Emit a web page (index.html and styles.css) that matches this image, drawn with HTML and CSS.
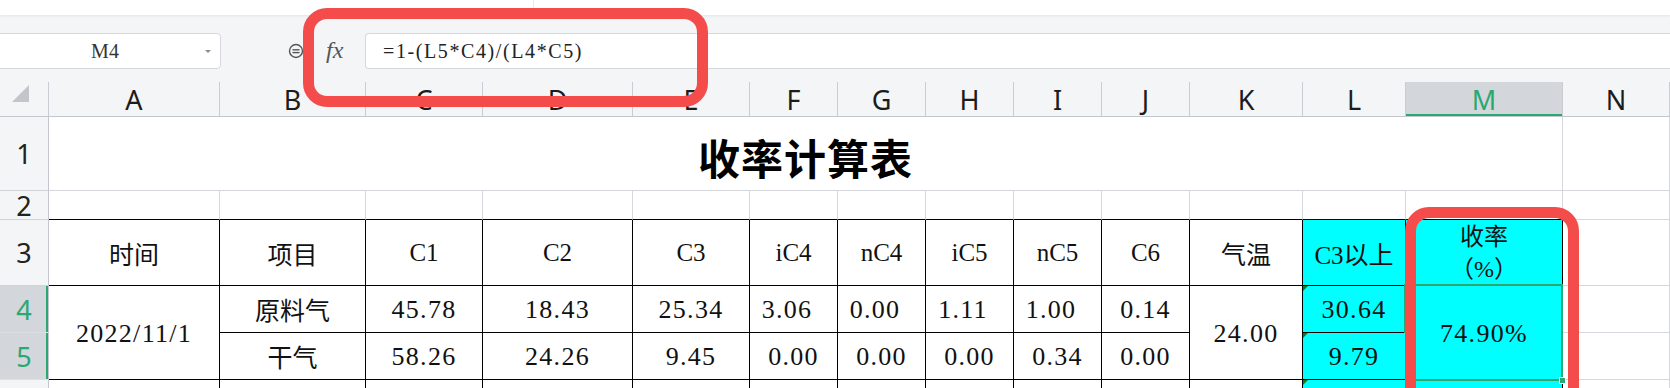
FILE: index.html
```html
<!DOCTYPE html>
<html lang="zh-CN">
<head>
<meta charset="UTF-8">
<title>收率计算表</title>
<link rel="stylesheet" href="styles.css">
</head>
<body>
<div class="topbar"><span class="tab-divider"></span></div>
<div class="strip"></div>
<div class="formula-bar">
    <div class="name-box"><span class="name-text">M4</span><span class="name-arrow"></span></div>
    <div class="fx-tools">
        <svg class="zoom-icon" width="16" height="16" viewBox="0 0 16 16"><circle cx="8" cy="8" r="6.5" fill="none" stroke="#555" stroke-width="1.4"/><line x1="4.5" y1="6.8" x2="11.5" y2="6.8" stroke="#555" stroke-width="1.4"/><line x1="4.5" y1="9.6" x2="11.5" y2="9.6" stroke="#555" stroke-width="1.4"/></svg>
        <span class="fx">fx</span>
    </div>
    <div class="formula-input">=1-(L5*C4)/(L4*C5)</div>
</div>
<div class="sheet-gap"></div>
<table class="grid">
<colgroup>
    <col class="w-hdr"><col class="w-a"><col class="w-b"><col class="w-c"><col class="w-d"><col class="w-e">
    <col class="w-f"><col class="w-f"><col class="w-f"><col class="w-f"><col class="w-f">
    <col class="w-k"><col class="w-l"><col class="w-m"><col class="w-n">
</colgroup>
<tr class="colhdr">
    <th class="corner"><span class="corner-tri"></span></th>
    <th>A</th><th>B</th><th>C</th><th>D</th><th>E</th><th>F</th><th>G</th><th>H</th><th>I</th><th>J</th><th>K</th><th>L</th><th class="active">M</th><th>N</th>
</tr>
<tr class="r1">
    <th class="rowhdr">1</th>
    <td colspan="13" class="title">收率计算表</td>
    <td></td>
</tr>
<tr class="r2">
    <th class="rowhdr">2</th>
    <td class="edge"></td><td class="edge"></td><td class="edge"></td><td class="edge"></td><td class="edge"></td><td class="edge"></td><td class="edge"></td>
    <td class="edge"></td><td class="edge"></td><td class="edge"></td><td class="edge"></td><td class="edge"></td><td class="edge"></td>
    <td></td>
</tr>
<tr class="r3">
    <th class="rowhdr">3</th>
    <td class="box">时间</td><td class="box">项目</td><td class="box">C1</td><td class="box">C2</td><td class="box">C3</td>
    <td class="box">iC4</td><td class="box">nC4</td><td class="box">iC5</td><td class="box">nC5</td><td class="box">C6</td>
    <td class="box">气温</td><td class="box cyan">C3以上</td><td class="box cyan rate-head">收率<br>（%）</td>
    <td></td>
</tr>
<tr class="r4">
    <th class="rowhdr active">4</th>
    <td rowspan="2" class="box num">2022/11/1</td>
    <td class="box">原料气</td>
    <td class="box num">45.78</td><td class="box num">18.43</td><td class="box num">25.34</td>
    <td class="box num trail">3.06</td><td class="box num trail">0.00</td><td class="box num trail">1.11</td><td class="box num trail">1.00</td>
    <td class="box num">0.14</td>
    <td rowspan="2" class="box num">24.00</td>
    <td class="box cyan num flag">30.64</td>
    <td rowspan="2" class="box cyan num sel">74.90%</td>
    <td></td>
</tr>
<tr class="r5">
    <th class="rowhdr active">5</th>
    <td class="box">干气</td>
    <td class="box num">58.26</td><td class="box num">24.26</td><td class="box num">9.45</td>
    <td class="box num">0.00</td><td class="box num">0.00</td><td class="box num">0.00</td><td class="box num">0.34</td><td class="box num">0.00</td>
    <td class="box cyan num flag">9.79</td>
    <td></td>
</tr>
<tr class="r6">
    <th class="rowhdr"></th>
    <td class="box"></td><td class="box"></td><td class="box"></td><td class="box"></td><td class="box"></td><td class="box"></td>
    <td class="box"></td><td class="box"></td><td class="box"></td><td class="box"></td><td class="box"></td>
    <td class="box cyan flag"></td><td class="box cyan"></td>
    <td></td>
</tr>
</table>
<div class="mark mark-formula"></div>
<div class="mark mark-rate"></div>
</body>
</html>
```

FILE: styles.css
```css
body { margin: 0; width: 1670px; height: 388px; overflow: hidden; position: relative; background: #fff; font-family: "Noto Sans", "Noto Sans CJK SC", sans-serif; color: #222; }

/* window chrome above the sheet */
.topbar { height: 15px; background: #fff; position: relative; z-index: 1; box-shadow: 0 1px 3px rgba(0, 0, 0, 0.07); }
.tab-divider { display: block; margin-left: 533px; width: 1px; height: 15px; background: #e8e9ec; }
.strip { height: 18px; background: #f4f5f7; }

.formula-bar { display: flex; height: 36px; background: #f4f5f7; }
.name-box { display: flex; align-items: center; box-sizing: border-box; width: 227px; margin-left: -6px; background: #fff; border: 1px solid #d6d8dd; border-radius: 4px; }
.name-text { flex: 1; padding-left: 10px; text-align: center; font-family: "Liberation Serif", serif; font-size: 20px; color: #333; }
.name-arrow { width: 0; height: 0; margin-right: 9px; border-left: 3px solid transparent; border-right: 3px solid transparent; border-top: 3px solid #8a8d93; }
.fx-tools { display: flex; align-items: center; width: 144px; padding-left: 67px; box-sizing: border-box; gap: 22px; }
.fx { font-family: "Liberation Serif", serif; font-style: italic; font-size: 24px; color: #555; margin-top: -2px; }
.formula-input { flex: 1; display: flex; align-items: center; padding-left: 17px; background: #fff; border: 1px solid #d6d8dd; border-right: 0; border-radius: 4px 0 0 4px; font-family: "Liberation Serif", serif; font-size: 20px; letter-spacing: 1.6px; color: #222; }

.sheet-gap { height: 13px; background: #f4f5f7; }

/* the grid */
.grid { width: 1670px; table-layout: fixed; border-collapse: separate; border-spacing: 0; }
.grid th, .grid td { box-sizing: border-box; padding: 0; border-right: 1px solid #d5d7dc; border-bottom: 1px solid #d5d7dc; text-align: center; vertical-align: middle; white-space: nowrap; overflow: visible; }
.w-hdr { width: 49px; }
.w-a { width: 171px; }
.w-b { width: 146px; }
.w-c { width: 117px; }
.w-d { width: 150px; }
.w-e { width: 117px; }
.w-f { width: 88px; }
.w-k { width: 113px; }
.w-l { width: 103px; }
.w-m { width: 157px; }
.w-n { width: 107px; }

.colhdr th { height: 35px; background: #f4f5f7; font-weight: normal; font-size: 27px; color: #1c1c1c; border-right-color: #c9ccd2; border-bottom-color: #c3c6cc; line-height: 1; }
.colhdr th.active { background: #d3d6db; color: #2aa872; box-shadow: inset 0 -2px 0 #2aa872; }
.corner { vertical-align: bottom; text-align: right; }
.corner-tri { display: inline-block; width: 0; height: 0; margin: 0 7px 8px 0; border-left: 17px solid transparent; border-bottom: 17px solid #c2c5ca; }

.rowhdr { background: #f4f5f7; font-weight: normal; font-size: 27px; color: #222; border-right-color: #c3c6cc !important; border-bottom-color: #d0d3d8 !important; line-height: 1; }
.rowhdr.active { background: #d3d6db; color: #2aa872; box-shadow: inset -2px 0 0 #2aa872; border-bottom-color: #dcdfe3 !important; }

.r1 td, .r1 th { height: 74px; }
.r2 td, .r2 th { height: 29px; }
.r3 td, .r3 th { height: 66px; }
.r4 td, .r4 th, .r5 td, .r5 th, .r6 td, .r6 th { height: 47px; }

.title { font-family: "Noto Sans CJK SC", sans-serif; font-size: 42px; font-weight: bold; letter-spacing: 1px; color: #000; padding-top: 6px !important; }
.edge { border-bottom-color: #000 !important; }

.box { border-right-color: #000 !important; border-bottom-color: #000 !important; font-family: "Liberation Serif", "Noto Sans CJK SC", serif; font-size: 25px; color: #111; }
.num { font-size: 26px; letter-spacing: 1.3px; padding-top: 2px !important; }
.trail { padding-right: 13px !important; }
.cyan { background: #00ffff; }
.rate-head { line-height: 32px; font-size: 24px; }

.flag, .sel { position: relative; }
.flag::before { content: ""; position: absolute; top: 0; left: 0; border-top: 5px solid #177a17; border-right: 5px solid transparent; }
.sel::after { content: ""; position: absolute; top: -2px; left: -2px; right: -1px; bottom: -2px; border: 2px solid #2aa872; }
.sel::before { content: ""; position: absolute; right: -4px; bottom: -5px; width: 5px; height: 5px; background: #2aa872; border: 1px solid #fff; z-index: 1; }

/* red annotation frames */
.mark { position: absolute; box-sizing: border-box; border: 11px solid #f44b4b; border-radius: 24px; z-index: 5; }
.mark-formula { left: 303px; top: 8px; width: 405px; height: 99px; }
.mark-rate { left: 1405px; top: 207px; width: 174px; height: 260px; }
```
